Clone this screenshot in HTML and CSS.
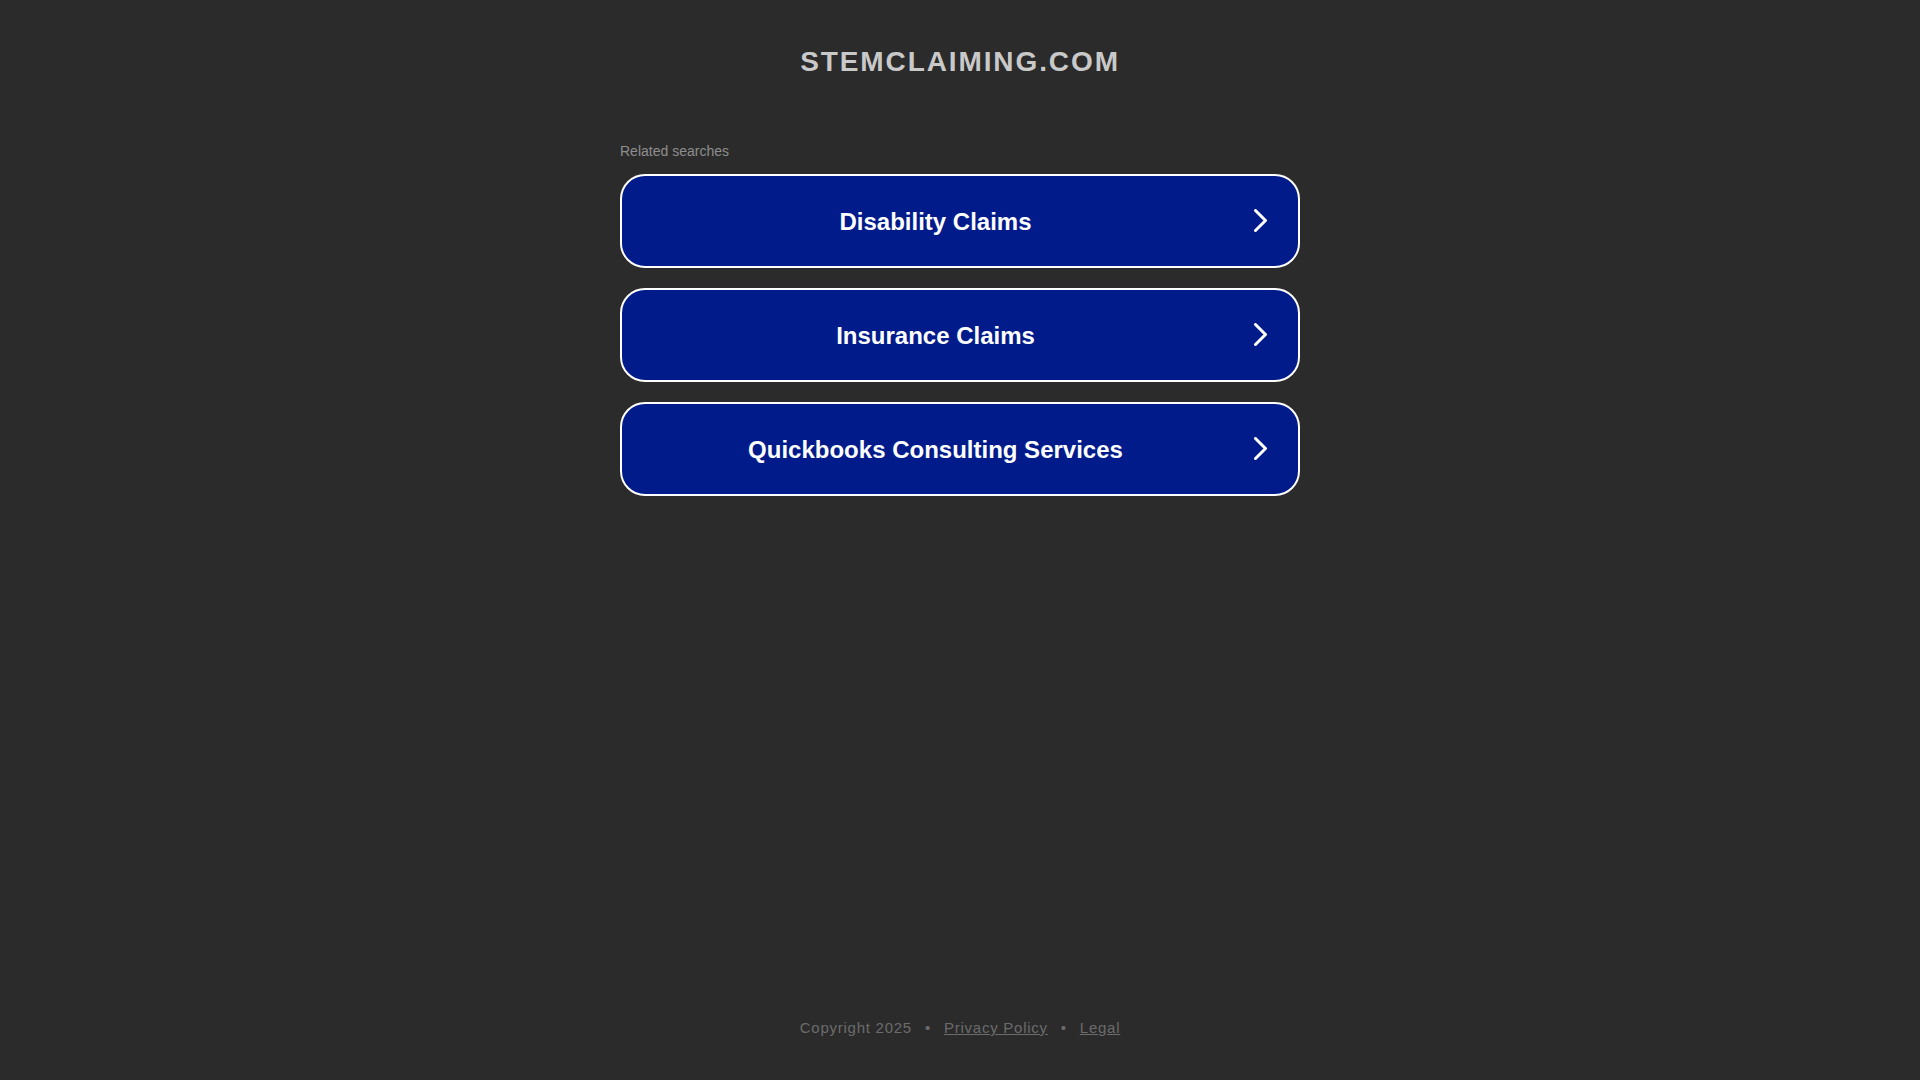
FILE: index.html
```html
<!DOCTYPE html>
<html lang="en">
<head>
<meta charset="utf-8">
<title>stemclaiming.com</title>
<link rel="stylesheet" href="styles.css">
</head>
<body>
<div class="page">
  <header class="header">
    <h1 class="domain">STEMCLAIMING.COM</h1>
  </header>
  <main class="content">
    <div class="related">Related searches</div>
    <div class="tiles">
      <a class="tile" href="#">
        <span class="tile-text">Disability Claims</span>
        <svg class="tile-arrow" viewBox="0 0 24 24" width="24" height="24" aria-hidden="true"><path d="M6.5 1.5 L16.5 11.5 L6.5 21.5" fill="none" stroke="#ffffff" stroke-width="3" stroke-linecap="round" stroke-linejoin="round"/></svg>
      </a>
      <a class="tile" href="#">
        <span class="tile-text">Insurance Claims</span>
        <svg class="tile-arrow" viewBox="0 0 24 24" width="24" height="24" aria-hidden="true"><path d="M6.5 1.5 L16.5 11.5 L6.5 21.5" fill="none" stroke="#ffffff" stroke-width="3" stroke-linecap="round" stroke-linejoin="round"/></svg>
      </a>
      <a class="tile" href="#">
        <span class="tile-text">Quickbooks Consulting Services</span>
        <svg class="tile-arrow" viewBox="0 0 24 24" width="24" height="24" aria-hidden="true"><path d="M6.5 1.5 L16.5 11.5 L6.5 21.5" fill="none" stroke="#ffffff" stroke-width="3" stroke-linecap="round" stroke-linejoin="round"/></svg>
      </a>
    </div>
  </main>
  <footer class="footer">
    <span>Copyright 2025</span><span class="sep">•</span><a href="#" class="footer-link">Privacy Policy</a><span class="sep">•</span><a href="#" class="footer-link">Legal</a>
  </footer>
</div>
</body>
</html>
```

FILE: styles.css
```css
html, body {
  margin: 0;
  padding: 0;
  background: #2b2b2b;
  font-family: "Liberation Sans", Arial, sans-serif;
}

.page {
  min-height: 100vh;
  display: flex;
  flex-direction: column;
  box-sizing: border-box;
}

.header {
  padding-top: 46px;
  text-align: center;
}

.domain {
  margin: 0;
  font-size: 28px;
  line-height: 32px;
  font-weight: 700;
  letter-spacing: 1.9px;
  color: #c9c9c9;
}

.content {
  width: 680px;
  margin: 65px auto 0;
}

.related {
  font-size: 14px;
  line-height: 16px;
  color: #8e8e8e;
  margin-bottom: 15px;
}

.tiles {
  display: flex;
  flex-direction: column;
  gap: 20px;
}

.tile {
  display: flex;
  align-items: center;
  height: 94px;
  box-sizing: border-box;
  border: 2px solid #ffffff;
  border-radius: 25px;
  background: #011b8b;
  text-decoration: none;
  padding-right: 25px;
}

.tile-text {
  flex: 1;
  text-align: center;
  font-size: 24px;
  line-height: 28px;
  padding-top: 2px;
  font-weight: 700;
  color: #ffffff;
}

.tile-arrow {
  flex: none;
  display: block;
}

.footer {
  margin-top: auto;
  padding-bottom: 42px;
  text-align: center;
  font-size: 15px;
  line-height: 20px;
  letter-spacing: 0.75px;
  color: #6b6b6b;
}

.footer-link {
  color: #6b6b6b;
  text-decoration: underline;
}

.sep {
  margin: 0 13px;
}
```
